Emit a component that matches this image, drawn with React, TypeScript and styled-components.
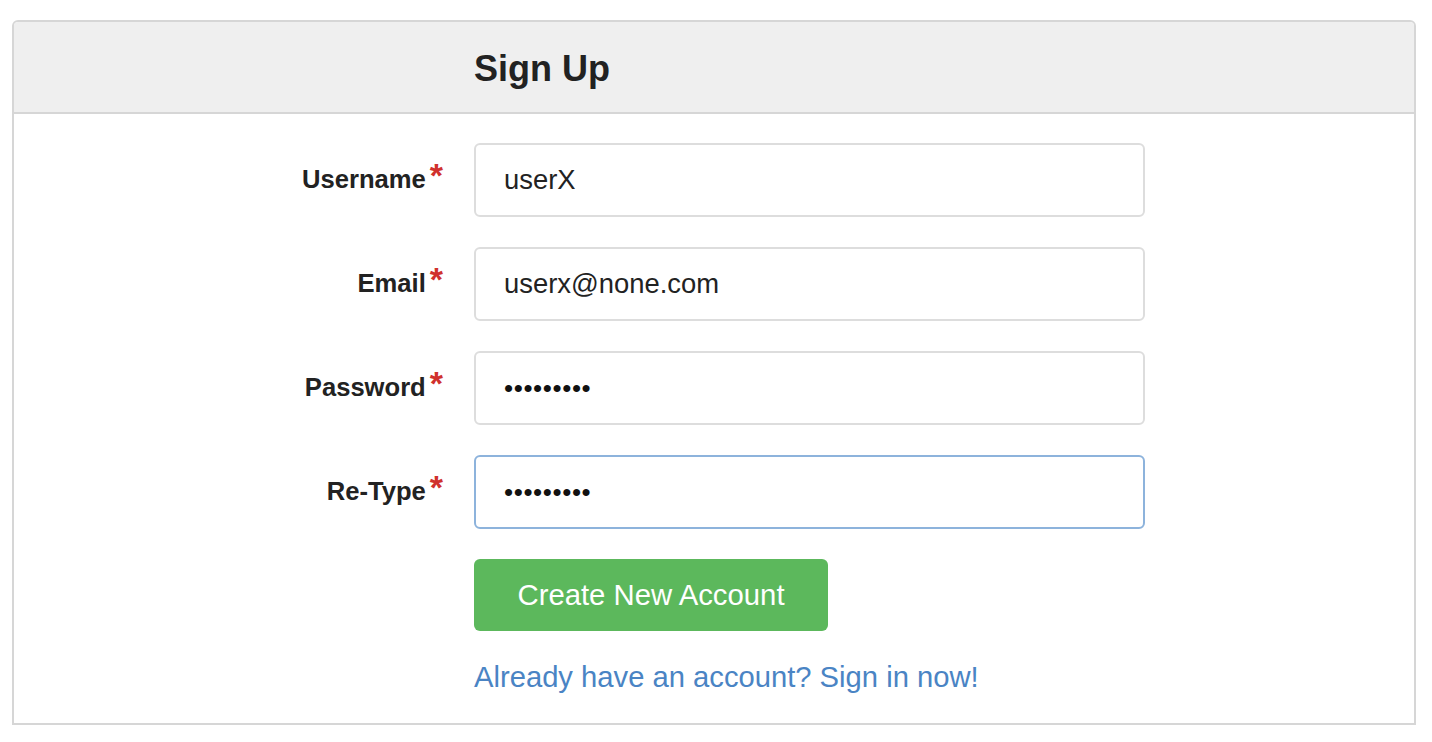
import React from "react";
import styled, { createGlobalStyle } from "styled-components";

const Global = createGlobalStyle`
  html, body { margin: 0; padding: 0; background: #ffffff; }
  body { font-family: "Liberation Sans", Arial, sans-serif; color: #222; }
  * { box-sizing: border-box; }
`;

const Page = styled.div`
  padding: 20px 16px 18px 12px;
`;

const Panel = styled.section`
  border: 2px solid #d6d6d6;
  border-radius: 6px 6px 0 0;
  background: #fff;
`;

const Header = styled.header`
  height: 92px;
  background: #efefef;
  border-bottom: 2px solid #d6d6d6;
  border-radius: 4px 4px 0 0;
  display: grid;
  grid-template-columns: 431px 1fr;
  column-gap: 29px;
  align-items: center;
`;

const Title = styled.h1`
  grid-column: 2;
  margin: 0;
  font-size: 36px;
  font-weight: 700;
  color: #222;
  letter-spacing: 0;
  transform: translateY(2px);
`;

const Form = styled.form`
  padding: 29px 0 27px;
  display: grid;
  grid-template-columns: 431px 671px;
  column-gap: 29px;
  row-gap: 30px;
  align-items: center;
`;

const Label = styled.label`
  justify-self: end;
  display: flex;
  align-items: flex-start;
  font-size: 25.6px;
  font-weight: 700;
  color: #222;
  margin-right: 2px;
  transform: translateY(2px);
`;

const Star = styled.span`
  color: #d0312d;
  font-size: 34px;
  font-weight: 700;
  margin-left: 4px;
  line-height: 1;
  transform: translateY(-7px);
`;

const Input = styled.input<{ $focused?: boolean }>`
  width: 671px;
  height: 74px;
  padding: 0 28px;
  border: 2px solid ${(p) => (p.$focused ? "#8db3dc" : "#dddddd")};
  border-radius: 6px;
  font-family: "Liberation Sans", Arial, sans-serif;
  font-size: 27.4px;
  color: #222;
  background: #fff;
  outline: none;
  &[type="password"] {
    font-size: 26px;
    letter-spacing: 0.6px;
    color: #111;
  }
`;

const Actions = styled.div`
  grid-column: 2;
  display: flex;
  flex-direction: column;
  align-items: flex-start;
  gap: 29px;
`;

const Button = styled.button`
  width: 354px;
  height: 72px;
  background: #5cb85c;
  border: none;
  border-radius: 6px;
  color: #fff;
  font-family: "Liberation Sans", Arial, sans-serif;
  font-size: 29.3px;
  cursor: pointer;
`;

const Link = styled.a`
  font-size: 29.2px;
  color: #4a84c4;
  text-decoration: none;
  line-height: 36px;
  transform: translateY(-1px);
`;

const fields = [
  { label: "Username", type: "text", value: "userX" },
  { label: "Email", type: "text", value: "userx@none.com" },
  { label: "Password", type: "password", value: "123456789" },
  { label: "Re-Type", type: "password", value: "123456789", focused: true },
];

export default function App() {
  return (
    <>
      <Global />
      <Page>
        <Panel>
          <Header>
            <Title>Sign Up</Title>
          </Header>
          <Form onSubmit={(e) => e.preventDefault()}>
            {fields.map((f) => (
              <React.Fragment key={f.label}>
                <Label>
                  {f.label}
                  <Star>*</Star>
                </Label>
                <Input
                  type={f.type}
                  defaultValue={f.value}
                  $focused={f.focused}
                />
              </React.Fragment>
            ))}
            <Actions>
              <Button type="submit">Create New Account</Button>
              <Link href="#">Already have an account? Sign in now!</Link>
            </Actions>
          </Form>
        </Panel>
      </Page>
    </>
  );
}
